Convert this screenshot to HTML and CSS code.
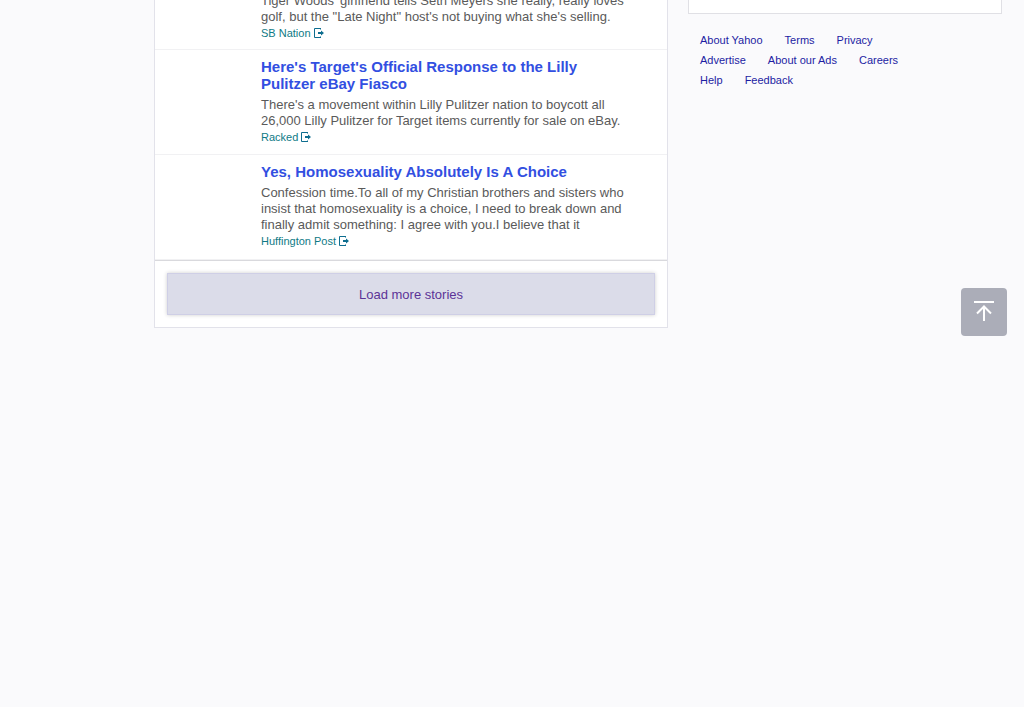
FILE: index.html
```html
<!DOCTYPE html>
<html lang="en">
<head>
<meta charset="utf-8">
<meta name="viewport" content="width=device-width, initial-scale=1">
<title>Yahoo</title>
<link rel="stylesheet" href="styles.css">
</head>
<body>
<svg class="symbols" aria-hidden="true">
  <symbol id="external" viewBox="0 0 10 10">
    <path d="M7 .5H.5v9H7M6.500 0v1.500M6.500 8.500V10" fill="none" stroke="currentColor"/>
    <path d="M4 4h3V2.500L10 5 7 7.500V6H4z" fill="currentColor"/>
  </symbol>
</svg>
<div class="page">
  <main class="stream">
    <article class="story story-clipped">
      <p class="summary">Tiger Woods' girlfriend tells Seth Meyers she really, really loves<br>golf, but the "Late Night" host's not buying what she's selling.</p>
      <a class="source" href="#">SB Nation <svg class="external"><use href="#external"/></svg></a>
    </article>
    <article class="story">
      <h3 class="title"><a href="#">Here's Target's Official Response to the Lilly<br>Pulitzer eBay Fiasco</a></h3>
      <p class="summary">There's a movement within Lilly Pulitzer nation to boycott all<br>26,000 Lilly Pulitzer for Target items currently for sale on eBay.</p>
      <a class="source" href="#">Racked <svg class="external"><use href="#external"/></svg></a>
    </article>
    <article class="story">
      <h3 class="title"><a href="#">Yes, Homosexuality Absolutely Is A Choice</a></h3>
      <p class="summary">Confession time.To all of my Christian brothers and sisters who<br>insist that homosexuality is a choice, I need to break down and<br>finally admit something: I agree with you.I believe that it</p>
      <a class="source" href="#">Huffington Post <svg class="external"><use href="#external"/></svg></a>
    </article>
    <div class="more">
      <button class="more-button" type="button">Load more stories</button>
    </div>
  </main>
  <aside class="side">
    <div class="side-card"></div>
    <nav class="links" aria-label="Footer">
      <div class="links-row"><a href="#">About Yahoo</a><a href="#">Terms</a><a href="#">Privacy</a></div>
      <div class="links-row"><a href="#">Advertise</a><a href="#">About our Ads</a><a href="#">Careers</a></div>
      <div class="links-row"><a href="#">Help</a><a href="#">Feedback</a></div>
    </nav>
  </aside>
</div>
<button class="to-top" type="button" aria-label="Back to top">
  <svg width="22" height="22" viewBox="0 0 22 22" fill="none" stroke="#fff" stroke-width="2"><path d="M1 2h20M11 21V7M4 13.500l7-7 7 7"/></svg>
</button>
</body>
</html>
```
FILE: styles.css
```css
* {
  box-sizing: border-box;
}

body {
  margin: 0;
  background: #fafafc;
  font-family: "Liberation Sans", Arial, sans-serif;
  overflow: hidden;
}

a {
  text-decoration: none;
}

.symbols {
  display: none;
}

.page {
  display: flex;
  align-items: flex-start;
  gap: 20px;
  padding: 0 22px 0 154px;
}

.stream {
  flex: 1;
  min-width: 0;
  background: #fff;
  border: 1px solid #e2e2ea;
  border-top: 0;
}

.story {
  display: flex;
  flex-direction: column;
  align-items: flex-start;
  min-height: 105px;
  padding: 8px 12px 8px 106px;
  border-bottom: 1px solid #f1f1f3;
  white-space: nowrap;
}

.story-clipped {
  min-height: 0;
  margin-top: -7px;
  padding-top: 0;
}

.title {
  margin: 0 0 5px;
  font-size: 15px;
  line-height: 17px;
}

.title a {
  color: #324fe1;
}

.summary {
  margin: 0;
  color: #5a5a5a;
  font-size: 13px;
  line-height: 16px;
}

.source {
  display: flex;
  align-items: center;
  gap: 3px;
  color: #0f7a86;
  font-size: 11px;
  line-height: 16px;
}

.external {
  width: 10px;
  height: 10px;
  color: #0d6d8f;
}

.more {
  padding: 12px;
  border-top: 1px solid #d9d9dd;
}

.more-button {
  display: block;
  width: 100%;
  padding: 13px 12px 11px;
  border: 1px solid #cfcfe6;
  background: #dbdce9;
  box-shadow: 0 0 4px rgba(0, 0, 0, 0.2);
  color: #5b3397;
  font: 13px/16px "Liberation Sans", Arial, sans-serif;
}

.side {
  flex: 0 0 314px;
}

.side-card {
  height: 14px;
  background: #fff;
  border: 1px solid #e0e0e5;
  border-top: 0;
}

.links {
  padding: 16px 12px;
  font-size: 11px;
  line-height: 20px;
}

.links-row {
  display: flex;
  gap: 22px;
}

.links a {
  color: #1d1da3;
}

.to-top {
  position: fixed;
  top: 288px;
  right: 17px;
  width: 46px;
  height: 48px;
  padding: 0;
  border: 0;
  border-radius: 4px;
  background: #abadb8;
}
```
